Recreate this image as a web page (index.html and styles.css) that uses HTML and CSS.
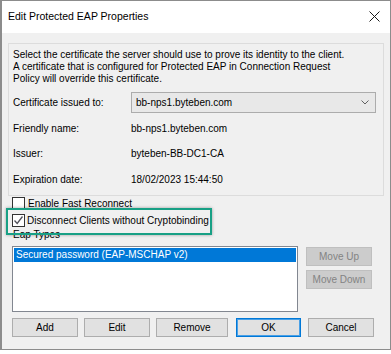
FILE: index.html
```html
<!DOCTYPE html>
<html lang="en">
<head>
    <meta charset="UTF-8">
    <title>Edit Protected EAP Properties</title>
    <link rel="stylesheet" href="styles.css">
</head>
<body>
    <div class="window">
        <div class="titlebar">
            <span class="title">Edit Protected EAP Properties</span>
            <svg class="close" width="11" height="11" viewBox="0 0 11 11">
                <path d="M0.5 0.5 L10.5 10.5 M10.5 0.5 L0.5 10.5" stroke="#1a1a1a" stroke-width="1" fill="none"/>
            </svg>
        </div>
        <div class="dialog">
            <div class="group">
                <p class="intro">
                    Select the certificate the server should use to prove its identity to the client.<br>
                    A certificate that is configured for Protected EAP in Connection Request<br>
                    Policy will override this certificate.
                </p>
                <div class="row">
                    <span class="label">Certificate issued to:</span>
                    <div class="combo">
                        <span>bb-nps1.byteben.com</span>
                        <svg width="8" height="5" viewBox="0 0 8 5">
                            <path d="M0.5 0.5 L4 4 L7.5 0.5" stroke="#606060" stroke-width="1" fill="none"/>
                        </svg>
                    </div>
                </div>
                <div class="row">
                    <span class="label">Friendly name:</span>
                    <span class="value">bb-nps1.byteben.com</span>
                </div>
                <div class="row">
                    <span class="label">Issuer:</span>
                    <span class="value">byteben-BB-DC1-CA</span>
                </div>
                <div class="row">
                    <span class="label">Expiration date:</span>
                    <span class="value">18/02/2023 15:44:50</span>
                </div>
            </div>

            <div class="check">
                <span class="box"></span>
                <span>Enable Fast Reconnect</span>
            </div>
            <div class="check check-marked">
                <span class="box">
                    <svg width="11" height="11" viewBox="0 0 11 11">
                        <path d="M1.5 5.5 L4.2 8.5 L9.5 1.5" stroke="#50505a" stroke-width="1.3" fill="none"/>
                    </svg>
                </span>
                <span>Disconnect Clients without Cryptobinding</span>
                <span class="highlight"></span>
            </div>

            <div class="eap-label">Eap Types</div>
            <div class="eap">
                <div class="list">
                    <div class="item selected">Secured password (EAP-MSCHAP v2)</div>
                </div>
                <div class="side-buttons">
                    <div class="btn disabled">Move Up</div>
                    <div class="btn disabled">Move Down</div>
                </div>
            </div>

            <div class="buttons">
                <div class="btn btn-add">Add</div>
                <div class="btn btn-edit">Edit</div>
                <div class="btn btn-remove">Remove</div>
                <div class="btn btn-ok">OK</div>
                <div class="btn btn-cancel">Cancel</div>
            </div>
        </div>
    </div>
</body>
</html>
```

FILE: styles.css
```css
body {
    margin: 0;
    background-color: #ffffff;
    font-family: 'Liberation Sans', Arial, sans-serif;
    font-size: 10px;
    color: #000000;
}
.window {
    width: 388px;
    height: 348px;
    border: 1px solid #8c8c8c;
    border-left-width: 2px;
    background-color: #f0f0f0;
    box-sizing: content-box;
    display: flex;
    flex-direction: column;
}
.titlebar {
    height: 30px;
    background-color: #ffffff;
    display: flex;
    align-items: center;
    justify-content: space-between;
    padding: 0 10px 2px 6px;
}
.title {
    font-size: 10.5px;
}
.close {
    display: block;
}
.dialog {
    padding: 10px 6px 0 6px;
}
.group {
    border: 1px solid #dcdcdc;
    padding: 5px 6px 4px 4px;
    height: 153px;
    box-sizing: border-box;
}
.intro {
    margin: 0;
    line-height: 12px;
}
.row {
    display: flex;
    align-items: center;
    height: 25.5px;
}
.row:first-of-type {
    margin-top: 5px;
}
.label {
    width: 118px;
    flex-shrink: 0;
}
.combo {
    flex: 1;
    height: 21px;
    box-sizing: border-box;
    border: 1px solid #acacac;
    background-color: #e8e8e8;
    display: flex;
    align-items: center;
    justify-content: space-between;
    padding: 0 6px 0 4px;
    margin-right: 1px;
}
.check {
    position: relative;
    display: flex;
    align-items: center;
    gap: 3px;
    height: 14px;
    margin-left: 4px;
}
.check:first-of-type {
    margin-top: 5px;
}
.check-marked {
    margin-top: 3px;
    gap: 2px;
}
.box {
    width: 13px;
    height: 13px;
    box-sizing: border-box;
    border: 1px solid #333333;
    background-color: #ffffff;
    display: flex;
    align-items: center;
    justify-content: center;
}
.highlight {
    position: absolute;
    left: -6px;
    top: -5px;
    width: 202px;
    height: 23px;
    border: 2px solid #18a085;
    box-shadow: 0 0 3px rgba(0, 0, 0, 0.35);
}
.eap-label {
    margin: 2px 0 0 5px;
    height: 12px;
    line-height: 12px;
}
.eap {
    display: flex;
    gap: 8px;
    margin: 5px 0 0 4px;
}
.list {
    width: 286px;
    height: 66px;
    box-sizing: border-box;
    border: 1px solid #828790;
    background-color: #ffffff;
    padding: 1px;
}
.item {
    height: 14px;
    line-height: 14px;
    padding-left: 2px;
}
.selected {
    background-color: #0078d7;
    color: #ffffff;
}
.side-buttons {
    display: flex;
    flex-direction: column;
    gap: 4px;
    padding-top: 1px;
}
.btn {
    height: 19px;
    box-sizing: border-box;
    border: 1px solid #adadad;
    background-color: #e1e1e1;
    display: flex;
    align-items: center;
    justify-content: center;
}
.side-buttons .btn {
    width: 66px;
}
.disabled {
    background-color: #cccccc;
    border-color: #bfbfbf;
    color: #838383;
}
.buttons {
    display: flex;
    margin: 6px 0 0 4px;
}
.btn-add {
    width: 66px;
}
.btn-edit {
    width: 66px;
    margin-left: 6px;
}
.btn-remove {
    width: 72px;
    margin-left: 6px;
}
.btn-ok {
    width: 65px;
    margin-left: 8px;
    border-color: #0078d7;
    box-shadow: inset 0 0 0 1px #4aa0e6;
}
.btn-cancel {
    width: 66px;
    margin-left: 7px;
}
```
